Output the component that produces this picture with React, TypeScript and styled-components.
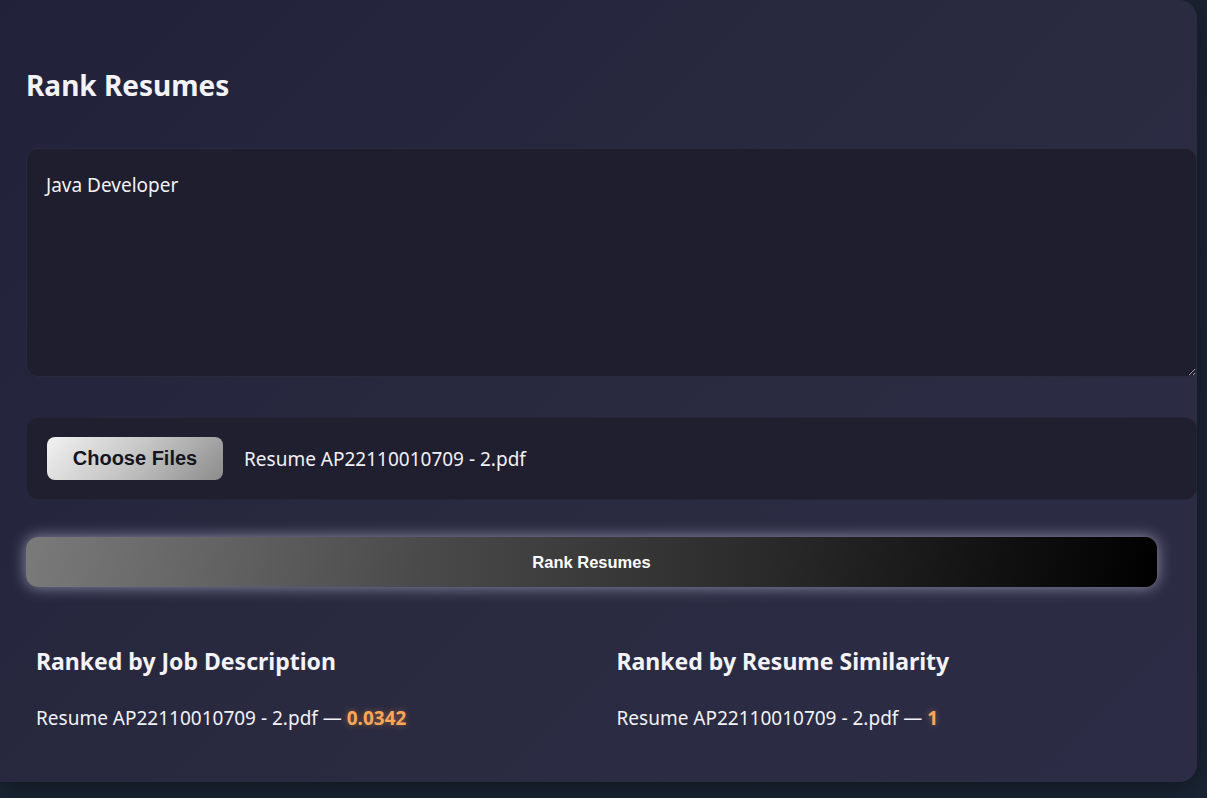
import styled, { createGlobalStyle } from "styled-components";

const GlobalStyle = createGlobalStyle`
  html, body {
    margin: 0;
    padding: 0;
    background: #19232f;
    font-family: "Noto Sans", "Open Sans", sans-serif;
    color: #f1f1f5;
  }
  * {
    box-sizing: border-box;
  }
`;

const Page = styled.div`
  min-height: 798px;
  padding: 0 10px 16px 0;
  background: linear-gradient(180deg, #1a2330 0%, #1a2433 100%);
`;

const Card = styled.div`
  height: 782px;
  padding: 67px 0 0 26px;
  border-radius: 0 18px 18px 0;
  background: linear-gradient(135deg, #21213a 0%, #292a40 50%, #2d2c46 100%);
  box-shadow: 0 6px 24px rgba(0, 0, 0, 0.35);
`;

const Title = styled.h2`
  margin: 0 0 45px 0;
  font-size: 28px;
  font-weight: 700;
  line-height: 36px;
  color: #f3f3f7;
`;

const JobInput = styled.textarea`
  display: block;
  width: 100%;
  height: 229px;
  padding: 23px 19px;
  margin: 0 0 40px 0;
  border: 1px solid #2b2a3d;
  border-radius: 12px;
  background: #1f1e2f;
  color: #f1f1f5;
  font-family: "Noto Sans", "Open Sans", sans-serif;
  font-size: 19px;
  line-height: 26px;
  outline: none;
  resize: vertical;
`;

const FileBox = styled.div`
  display: flex;
  align-items: center;
  gap: 21px;
  height: 83px;
  padding: 0 20px;
  margin-bottom: 37px;
  border: 1px solid #262537;
  border-radius: 12px;
  background: #201f30;
`;

const ChooseButton = styled.button`
  width: 176px;
  height: 43px;
  border: none;
  border-radius: 8px;
  background: linear-gradient(135deg, #f2f2f2 0%, #c4c4c4 50%, #8c8c8c 100%);
  color: #15151f;
  font-family: "Liberation Sans", Arial, sans-serif;
  font-size: 20px;
  font-weight: 700;
  cursor: pointer;
`;

const FileName = styled.span`
  font-size: 19px;
  color: #f1f1f5;
`;

const RankButton = styled.button`
  display: block;
  width: calc(100% - 40px);
  height: 50px;
  border: none;
  border-radius: 12px;
  background: linear-gradient(100deg, #7a7a7a 0%, #4a4a4a 35%, #2a2a2a 65%, #000 100%);
  box-shadow: 0 0 15px rgba(215, 215, 240, 0.6);
  color: #fff;
  font-family: "Liberation Sans", Arial, sans-serif;
  font-size: 16.5px;
  font-weight: 700;
  cursor: pointer;
`;

const Results = styled.div`
  display: grid;
  grid-template-columns: 1fr 1fr;
  gap: 10px;
  padding: 59px 10px 0 10px;
`;

const Column = styled.div`
  display: flex;
  flex-direction: column;
`;

const ColumnTitle = styled.h3`
  margin: 0 0 29px 0;
  font-size: 23px;
  font-weight: 700;
  line-height: 30px;
  color: #f3f3f7;
`;

const ResultRow = styled.div`
  font-size: 19px;
  line-height: 26px;
  color: #f1f1f5;
`;

const Score = styled.strong`
  color: #ffa657;
  font-weight: 700;
  text-shadow: 0 0 6px rgba(255, 160, 80, 0.45);
`;

const byJob = [{ name: "Resume AP22110010709 - 2.pdf", score: "0.0342" }];
const bySimilarity = [{ name: "Resume AP22110010709 - 2.pdf", score: "1" }];

const App = () => {
  return (
    <>
      <GlobalStyle />
      <Page>
        <Card>
          <Title>Rank Resumes</Title>
          <JobInput defaultValue="Java Developer" />
          <FileBox>
            <ChooseButton>Choose Files</ChooseButton>
            <FileName>Resume AP22110010709 - 2.pdf</FileName>
          </FileBox>
          <RankButton>Rank Resumes</RankButton>
          <Results>
            <Column>
              <ColumnTitle>Ranked by Job Description</ColumnTitle>
              {byJob.map((r, i) => (
                <ResultRow key={i}>
                  {r.name} — <Score>{r.score}</Score>
                </ResultRow>
              ))}
            </Column>
            <Column>
              <ColumnTitle>Ranked by Resume Similarity</ColumnTitle>
              {bySimilarity.map((r, i) => (
                <ResultRow key={i}>
                  {r.name} — <Score>{r.score}</Score>
                </ResultRow>
              ))}
            </Column>
          </Results>
        </Card>
      </Page>
    </>
  );
};

export default App;
